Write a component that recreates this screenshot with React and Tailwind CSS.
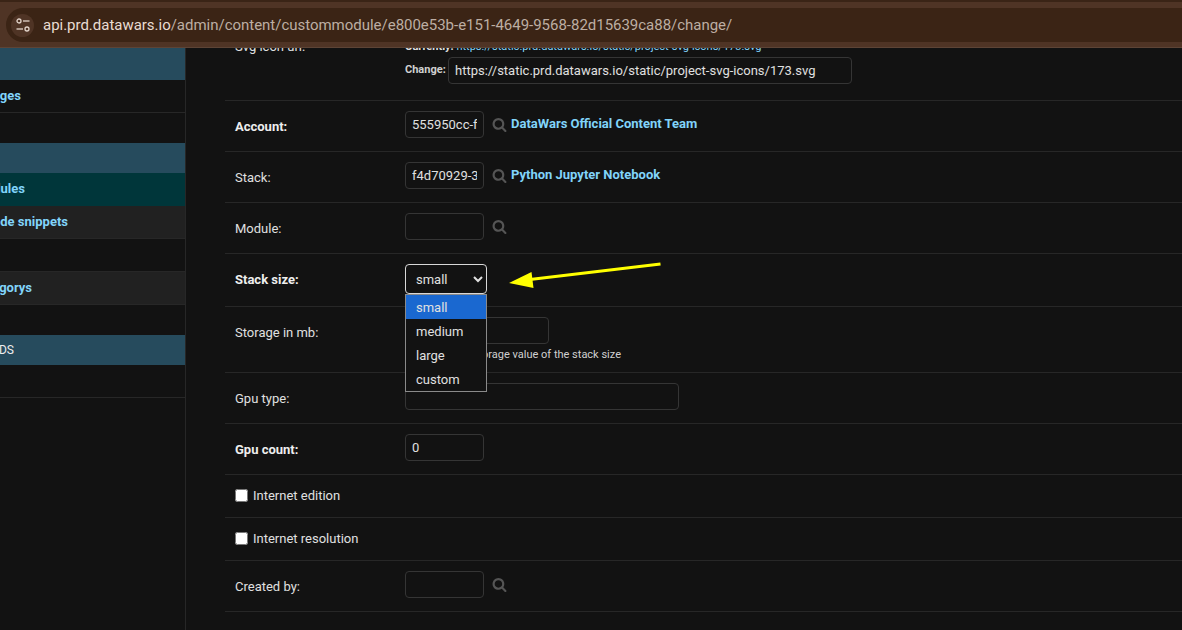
const SearchIcon = () => (
  <svg viewBox="0 0 1792 1792" className="w-[15px] h-[15px] shrink-0" fill="#555555">
    <path d="M1216 832q0-185-131.500-316.500t-316.500-131.500-316.500 131.500-131.500 316.500 131.500 316.500 316.500 131.500 316.500-131.500 131.500-316.500zm512 832q0 52-38 90t-90 38q-54 0-90-38l-343-342q-179 124-399 124-143 0-273.500-55.500t-225-150-150-225-55.500-273.500 55.500-273.500 150-225 225-150 273.500-55.500 273.500 55.500 225 150 150 225 55.500 273.500q0 220-124 399l343 343q37 37 37 90z" />
  </svg>
);

const TuneIcon = () => (
  <svg viewBox="0 0 16 16" className="w-4 h-4" fill="none" stroke="#e3d5cb" strokeWidth="1.3">
    <circle cx="4" cy="4" r="2" />
    <path d="M8 4h6.500" />
    <path d="M1.500 12h6.500" />
    <circle cx="12" cy="12" r="2" />
  </svg>
);

const Field = ({ value = "", w = "w-[79px]" }) => (
  <input
    readOnly
    value={value}
    className={`${w} h-[27px] rounded border border-[#353535] bg-[#121212] px-[6px] text-[13px] text-[#e0e0e0] outline-none`}
  />
);

const Label = ({ children, bold }) => (
  <div className={`w-[170px] shrink-0 mt-[8px] leading-4 text-[13px] ${bold ? "font-bold text-[#eeeeee]" : "text-[#e0e0e0]"}`}>
    {children}
  </div>
);

const Row = ({ label, bold, className = "", children }) => (
  <div className={`flex items-start pl-[10px] pt-[10px] border-b border-[#272727] ${className}`}>
    <Label bold={bold}>{label}</Label>
    {children}
  </div>
);

const Lookup = ({ value, name }) => (
  <div className="flex items-start">
    <Field value={value} />
    <div className="ml-[8px] mt-[6px]">
      <SearchIcon />
    </div>
    {name && <a className="ml-[4px] mt-[5px] leading-4 text-[13px] font-bold text-[#81d4fa]">{name}</a>}
  </div>
);

const Check = ({ label }) => (
  <div className="h-[43px] flex items-center pl-[10px] border-b border-[#272727] text-[13px] text-[#e0e0e0]">
    <input type="checkbox" className="w-[13px] h-[13px] m-0 -mt-[2px]" readOnly />
    <span className="ml-[5px]">{label}</span>
  </div>
);

const SideText = ({ end, children, className = "" }) => (
  <div className={`flex justify-end whitespace-nowrap ${end} ${className}`}>{children}</div>
);

const Side = ({ h, bg = "", border, children, className = "" }) => (
  <div className={`${h} ${bg} ${border ? "border-b border-[#272727]" : ""} flex items-center overflow-visible ${className}`}>{children}</div>
);

export default function App() {
  return (
    <div className="w-[1182px] h-[630px] overflow-hidden bg-[#121212] font-['Roboto',sans-serif]">
      <header className="h-[48px] bg-[#4f3425] border-t-2 border-[#3a2416] border-b border-b-[#5d4436] pt-[6px]">
        <div className="ml-[6px] h-[34px] rounded-l-[17px] bg-[#3b2415] flex items-center pl-[5px]">
          <div className="w-[23px] h-[23px] rounded-full bg-[#4f3425] flex items-center justify-center">
            <TuneIcon />
          </div>
          <div className="ml-[9px] text-[15px] tracking-[-0.02px] whitespace-nowrap text-[#e9dcd2]">
            api.prd.datawars.io<span className="text-[#bdaea3]">/admin/content/custommodule/e800e53b-e151-4649-9568-82d15639ca88/change/</span>
          </div>
        </div>
      </header>

      <main className="relative h-[582px] flex overflow-hidden text-[#eeeeee]">
        <aside className="w-[186px] shrink-0 border-r border-[#272727] text-[13px] font-bold text-[#81d4fa]">
          <Side h="h-[32px]" bg="bg-[#264b5d]" />
          <Side h="h-[33px]" border>
            <SideText end="w-[21px]">Pages</SideText>
          </Side>
          <Side h="h-[30px]" />
          <Side h="h-[30px]" bg="bg-[#264b5d]" />
          <Side h="h-[33px]" bg="bg-[#00363a]" className="pb-[2px]">
            <SideText end="w-[25px]">Custom modules</SideText>
          </Side>
          <Side h="h-[33px]" bg="bg-[#212121]" border>
            <SideText end="w-[68px]">Code snippets</SideText>
          </Side>
          <Side h="h-[33px]" border />
          <Side h="h-[33px]" bg="bg-[#212121]" border>
            <SideText end="w-[32px]">Categorys</SideText>
          </Side>
          <Side h="h-[30px]" />
          <Side h="h-[30px]" bg="bg-[#264b5d]">
            <SideText end="w-[14px]" className="font-normal text-[12px] text-[#eeeeee]">FIELDS</SideText>
          </Side>
          <Side h="h-[33px]" border />
        </aside>

        <section className="flex-1 min-w-0 pl-[39px]">
          <div className="h-[53px] flex pl-[10px] border-b border-[#272727]">
            <div className="w-[170px] shrink-0 -mt-[9px] text-[13px] leading-4 text-[#e0e0e0]">Svg icon url:</div>
            <div className="-mt-[9px]">
              <div className="h-[16px] text-[11px] leading-4 whitespace-nowrap">
                <span className="font-bold text-[#e0e0e0]">Currently:</span>{" "}
                <a className="text-[#81d4fa]">https://static.prd.datawars.io/static/project-svg-icons/173.svg</a>
              </div>
              <div className="flex items-center mt-[2px]">
                <span className="w-[43px] text-[11px] font-bold text-[#d0d0d0]">Change:</span>
                <input
                  readOnly
                  value="https://static.prd.datawars.io/static/project-svg-icons/173.svg"
                  className="w-[404px] h-[27px] rounded border border-[#353535] bg-[#121212] px-[6px] text-[13px] text-[#e0e0e0] outline-none"
                />
              </div>
            </div>
          </div>

          <Row label="Account:" bold className="h-[51px]">
            <Lookup value="555950cc-f" name="DataWars Official Content Team" />
          </Row>
          <Row label="Stack:" className="h-[51px]">
            <Lookup value="f4d70929-3" name="Python Jupyter Notebook" />
          </Row>
          <Row label="Module:" className="h-[51px]">
            <Lookup />
          </Row>
          <Row label="Stack size:" bold className="h-[53px]">
            <select className="w-[82px] h-[30px] rounded border border-[#d8d8d8] bg-[#121212] pl-[6px] text-[13px] text-[#e0e0e0] outline-none [color-scheme:dark]" defaultValue="small">
              <option>small</option>
              <option>medium</option>
              <option>large</option>
              <option>custom</option>
            </select>
          </Row>
          <Row label="Storage in mb:" className="h-[66px]">
            <div>
              <Field w="w-[144px]" />
              <div className="mt-[3px] text-[11px] leading-4 whitespace-nowrap text-[#d0d0d0]">Enter custom storage value of the stack size</div>
            </div>
          </Row>
          <Row label="Gpu type:" className="h-[51px]">
            <Field w="w-[274px]" />
          </Row>
          <Row label="Gpu count:" bold className="h-[51px]">
            <Field value="0" />
          </Row>
          <Check label="Internet edition" />
          <Check label="Internet resolution" />
          <Row label="Created by:" className="h-[51px]">
            <Lookup />
          </Row>
        </section>

        <div className="absolute left-[405px] top-[246px] w-[82px] border border-[#8a8a8a] bg-[#121212] text-[13px] text-[#e0e0e0]">
          <div className="h-[24px] pl-[10px] leading-[25px] bg-[#1a68d0]">small</div>
          <div className="h-[24px] pl-[10px] leading-[25px]">medium</div>
          <div className="h-[24px] pl-[10px] leading-[25px]">large</div>
          <div className="h-[24px] pl-[10px] leading-[25px]">custom</div>
        </div>

        <svg className="absolute left-[500px] top-[206px] w-[170px] h-[50px]" viewBox="0 0 170 50">
          <path d="M160.500 10 L30 25.500" stroke="#ffff00" strokeWidth="3" fill="none" />
          <path d="M9 29 L31.500 18 L33.500 34 Z" fill="#ffff00" />
        </svg>
      </main>
    </div>
  );
}
